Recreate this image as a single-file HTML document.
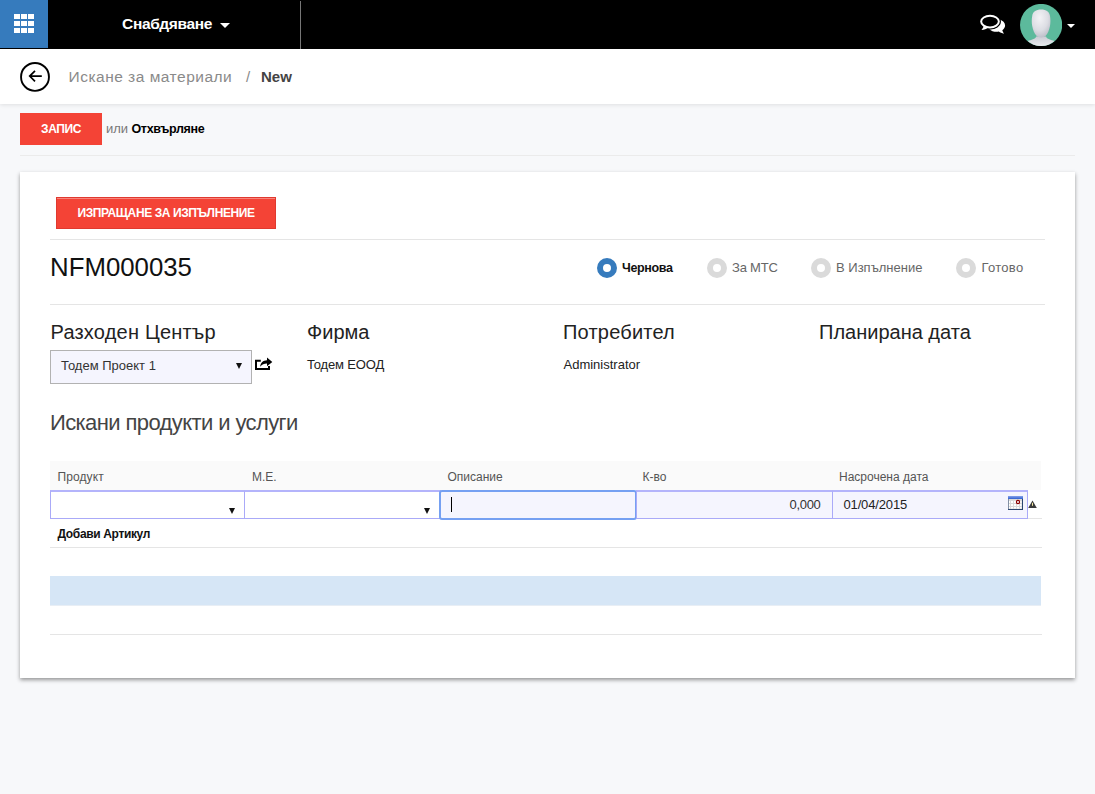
<!DOCTYPE html>
<html lang="bg">
<head>
<meta charset="utf-8">
<title>Искане за материали</title>
<style>
*{box-sizing:border-box;margin:0;padding:0}
html,body{width:1095px;height:794px;overflow:hidden}
body{background:#f7f8fa;font-family:"Liberation Sans",sans-serif;font-size:13px;color:#222;position:relative}
.abs{position:absolute;white-space:nowrap}
#topbar{left:0;top:0;width:1095px;height:49px;background:#000}
#apps{left:0;top:0;width:48px;height:48px;background:#367bbd}
#menu{left:122px;top:14px;color:#fff;font-size:15.500px;font-weight:bold;line-height:20px;letter-spacing:-0.3px}
.caret{width:0;height:0;border-left:5px solid transparent;border-right:5px solid transparent;border-top:5px solid #fff}
#sep{left:300px;top:1px;width:1px;height:48px;background:#777}
#crumbbar{left:0;top:49px;width:1095px;height:55px;background:#fff;box-shadow:0 1px 4px rgba(0,0,0,.10)}
#back{left:20px;top:62px;width:30px;height:30px}
#crumb1{left:68.500px;top:67px;font-size:15.500px;line-height:20px;color:#8a8a8a;letter-spacing:0.5px}
#crumbsl{left:246px;top:67px;font-size:15px;line-height:20px;color:#8a8a8a}
#crumb2{left:261px;top:67px;font-size:15px;line-height:20px;color:#444;font-weight:bold}
.btn{background:#f44336;color:#fff;font-weight:bold;font-size:12px;text-align:center;letter-spacing:-0.4px}
#save{left:20px;top:113px;width:82px;height:32px;line-height:32px}
#or{left:106px;top:121px;font-size:13px;line-height:16px;color:#777}
#discard{left:131.500px;top:121px;font-size:12.500px;line-height:16px;color:#000;font-weight:bold;letter-spacing:-0.35px}
.hr{height:1px;background:#e5e5e5}
#card{left:20px;top:172px;width:1055px;height:506px;background:#fff;box-shadow:0 2px 4px rgba(0,0,0,.4)}
#send{left:56px;top:197px;width:220px;height:32px;line-height:30px;border:1px solid #e0392f;letter-spacing:-0.4px;box-shadow:inset 0 1px 0 rgba(255,255,255,.35)}
#num{left:50px;top:251px;font-size:25.800px;line-height:32px;color:#111}
.radio{width:20px;height:20px;border-radius:50%;border:6px solid #dadada;background:#fff}
.radio.on{border-color:#367bbd}
.rl{font-size:13px;line-height:16px;color:#666}
.rl.on{color:#111;font-weight:bold;font-size:12.500px;letter-spacing:-0.35px}
.lbl{font-size:20px;line-height:24px;color:#222}
.val{font-size:13px;line-height:16px;color:#222}
#sel{left:50px;top:350px;width:202px;height:34px;background:#f5f5fe;border:1px solid #b2b2b2;font-size:13px;line-height:29px;padding-left:10px;color:#333}
#h2{left:50px;top:410px;font-size:22px;line-height:26px;color:#444;letter-spacing:-0.6px}
#thead{left:50px;top:461px;width:991px;height:29px;background:#fafafa}
.th{top:469px;font-size:12px;line-height:16px;color:#555}
.cell{top:490px;height:29px;border:1px solid #aaaaf8;border-top:2px solid #b4b4fb;background:#fff}
.arr{width:0;height:0;border-left:3px solid transparent;border-right:3px solid transparent;border-top:6px solid #111}
#add{left:57.500px;top:526px;font-size:12px;line-height:16px;font-weight:bold;color:#111;letter-spacing:-0.35px}
#band{left:50px;top:576px;width:991px;height:30px;background:#d6e6f6;border-bottom:1px solid #e8eef5}
</style>
</head>
<body>
<div class="abs" id="topbar"></div>
<div class="abs" id="apps">
<svg class="abs" style="left:14px;top:14px" width="20" height="20" viewBox="0 0 20 20"><g fill="#fff"><rect x="0" y="0" width="6" height="5"/><rect x="7" y="0" width="6" height="5"/><rect x="14" y="0" width="6" height="5"/><rect x="0" y="7" width="6" height="5"/><rect x="7" y="7" width="6" height="5"/><rect x="14" y="7" width="6" height="5"/><rect x="0" y="14" width="6" height="5"/><rect x="7" y="14" width="6" height="5"/><rect x="14" y="14" width="6" height="5"/></g></svg>
</div>
<div class="abs" id="menu">Снабдяване</div>
<div class="abs caret" style="left:220px;top:23px"></div>
<div class="abs" id="sep"></div>
<svg class="abs" id="chat" style="left:979px;top:13px" width="28" height="22" viewBox="0 0 28 22"><path d="M20.500 6.600c3.300 1 5.600 3.300 5.600 6 0 1.900-1.100 3.500-2.800 4.600 0.300 1.300 1 2.400 1.700 3.600-2.200-0.300-3.900-1.200-5.200-2.200-0.700 0.100-1.400 0.200-2.100 0.200-3 0-5.700-1-7.400-2.600 6.500 0.600 11.500-3.400 10.200-9.600z" fill="#fff"/><ellipse cx="11" cy="8.600" rx="8.850" ry="5.800" fill="#000" stroke="#000" stroke-width="4.200"/><ellipse cx="11" cy="8.600" rx="8.850" ry="5.800" fill="#000" stroke="#fff" stroke-width="2"/><path d="M4.800 12.600c-0.300 1.600-1 3-2.300 4.400 2.800-0.200 5-1.200 6.800-2.600z" fill="#fff"/></svg>
<svg class="abs" id="avatar" style="left:1020px;top:4px" width="42" height="42" viewBox="0 0 42 42"><defs><clipPath id="cp"><circle cx="21.100" cy="21" r="21"/></clipPath><radialGradient id="hg" cx="0.420" cy="0.300" r="0.750"><stop offset="0" stop-color="#f3f3f6"/><stop offset="0.600" stop-color="#dcdde3"/><stop offset="1" stop-color="#b9bbc6"/></radialGradient><linearGradient id="sg" x1="0" y1="0" x2="0" y2="1"><stop offset="0" stop-color="#c9cbd3"/><stop offset="0.400" stop-color="#d9dbe1"/><stop offset="1" stop-color="#f0f0f3"/></linearGradient></defs><circle cx="21.100" cy="21" r="21.100" fill="#5cba9c"/><g clip-path="url(#cp)"><path d="M16.100 32.500C15.600 35.300 11 35.800 7.800 36.900L2 40V44H40V40L34.400 36.900C31.200 35.800 26.600 35.300 26.100 32.500z" fill="url(#sg)"/><path d="M21.100 5.600C26.300 5.600 29.500 7.800 30 12C30.600 15 30.600 19 30 22C29.300 26 27.800 29.300 25.900 31.600C24.600 33 23 33.500 21.100 33.500C19.200 33.500 17.600 33 16.300 31.600C14.400 29.300 12.900 26 12.200 22C11.600 19 11.600 15 12.200 12C12.700 7.800 15.900 5.600 21.100 5.600z" fill="url(#hg)"/></g></svg>
<div class="abs caret" style="left:1067px;top:24px;border-left-width:4px;border-right-width:4px;border-top-width:4px"></div>

<div class="abs" id="crumbbar"></div>
<svg class="abs" id="back" viewBox="0 0 30 30"><circle cx="15" cy="14.900" r="13.950" fill="#fff" stroke="#000" stroke-width="1.900"/><path d="M21.800 14.100H10M15 8.800L9.700 14.100L15 19.400" fill="none" stroke="#000" stroke-width="1.700"/></svg>
<div class="abs" id="crumb1">Искане за материали</div>
<div class="abs" id="crumbsl">/</div>
<div class="abs" id="crumb2">New</div>

<div class="abs btn" id="save">ЗАПИС</div>
<div class="abs" id="or">или</div>
<div class="abs" id="discard">Отхвърляне</div>
<div class="abs hr" style="left:20px;top:155px;width:1055px;background:#ebebeb"></div>

<div class="abs" id="card"></div>
<div class="abs btn" id="send">ИЗПРАЩАНЕ ЗА ИЗПЪЛНЕНИЕ</div>
<div class="abs hr" style="left:50px;top:239px;width:995px"></div>
<div class="abs" id="num">NFM000035</div>

<div class="abs radio on" style="left:597px;top:258px"></div>
<div class="abs rl on" style="left:622px;top:260px">Чернова</div>
<div class="abs radio" style="left:707px;top:258px"></div>
<div class="abs rl" style="left:732px;top:260px;letter-spacing:-0.2px">За МТС</div>
<div class="abs radio" style="left:811px;top:258px"></div>
<div class="abs rl" style="left:836px;top:260px">В Изпълнение</div>
<div class="abs radio" style="left:956px;top:258px"></div>
<div class="abs rl" style="left:981.500px;top:260px;letter-spacing:0.3px">Готово</div>
<div class="abs hr" style="left:50px;top:304px;width:995px"></div>

<div class="abs lbl" style="left:50.500px;top:320px;letter-spacing:0.2px">Разходен Център</div>
<div class="abs lbl" style="left:307px;top:320px">Фирма</div>
<div class="abs lbl" style="left:563px;top:320px;letter-spacing:0.2px">Потребител</div>
<div class="abs lbl" style="left:819px;top:320px">Планирана дата</div>
<div class="abs" id="sel">Тодем Проект 1</div>
<div class="abs arr" style="left:236px;top:363px"></div>
<svg class="abs" id="share" style="left:255px;top:357px" width="18" height="14" viewBox="0 0 18 14"><path d="M0 2.800H5.800V4.800H2V11.100H13V9H15V13.100H0z" fill="#000"/><path d="M12 0.600L17.300 4.900L12 9.200V6.600C9 6.600 7 7.400 5.200 9.700C5.500 5.600 8 3.300 12 3.200z" fill="#000"/></svg>
<div class="abs val" style="left:307px;top:357px;letter-spacing:-0.15px">Тодем ЕООД</div>
<div class="abs val" style="left:563.500px;top:357px">Administrator</div>

<div class="abs" id="h2">Искани продукти и услуги</div>
<div class="abs" id="thead"></div>
<div class="abs th" style="left:57.500px;letter-spacing:0.1px">Продукт</div>
<div class="abs th" style="left:252px">М.Е.</div>
<div class="abs th" style="left:447.500px">Описание</div>
<div class="abs th" style="left:642.500px">К-во</div>
<div class="abs th" style="left:839px">Насрочена дата</div>

<div class="abs hr" style="left:50px;top:518px;width:992px"></div>
<div class="abs cell" style="left:50px;width:195px"></div>
<div class="abs arr" style="left:229px;top:508px"></div>
<div class="abs cell" style="left:244px;width:197px"></div>
<div class="abs arr" style="left:424px;top:508px"></div>
<div class="abs cell" style="left:439px;width:198px;height:30px;background:#f5f5fe;border:2px solid #75a0f2;border-radius:3px"></div>
<div class="abs" style="left:451px;top:497px;width:1px;height:15px;background:#000"></div>
<div class="abs cell" style="left:636px;width:197px;background:#f5f5fe"></div>
<div class="abs val" style="left:789.500px;top:497px;color:#333;letter-spacing:-0.3px">0,000</div>
<div class="abs cell" style="left:832px;width:196px;background:#f5f5fe"></div>
<div class="abs val" style="left:843.500px;top:497px;color:#222;letter-spacing:-0.15px">01/04/2015</div>
<svg class="abs" id="cal" style="left:1008px;top:496px" width="15" height="14" viewBox="0 0 15 14"><defs><linearGradient id="cg" x1="0" y1="0" x2="0" y2="1"><stop offset="0" stop-color="#86a2ea"/><stop offset="1" stop-color="#2f5fd0"/></linearGradient></defs><rect x="0" y="0" width="15" height="14" fill="#2c4670"/><rect x="0.500" y="3" width="13.500" height="10" fill="#dadada"/><rect x="0" y="0" width="15" height="3" fill="url(#cg)"/><g fill="#fff"><rect x="1" y="5" width="1" height="2"/><rect x="3" y="5" width="2" height="2"/><rect x="6" y="5" width="2" height="2"/><rect x="9" y="5" width="2" height="2"/><rect x="12" y="5" width="1.5" height="2"/><rect x="1" y="8" width="1" height="2"/><rect x="3" y="8" width="2" height="2"/><rect x="6" y="8" width="2" height="2"/><rect x="9" y="8" width="2" height="2"/><rect x="12" y="8" width="1.5" height="2"/><rect x="1" y="11" width="1" height="1.5"/><rect x="3" y="11" width="2" height="1.5"/><rect x="6" y="11" width="2" height="1.5"/><rect x="9" y="11" width="2" height="1.5"/><rect x="12" y="11" width="1.5" height="1.5"/></g><circle cx="10" cy="6" r="1.600" fill="#fff" stroke="#8b0000" stroke-width="1.200"/></svg>
<svg class="abs" id="warn" style="left:1028px;top:500px" width="9" height="8" viewBox="0 0 9 8"><path d="M4.500 0.600L8.800 8H0.200z" fill="#3a3a3a"/><rect x="4" y="2.800" width="1" height="3" fill="#f3e7a0"/></svg>
<div class="abs" id="add">Добави Артикул</div>
<div class="abs hr" style="left:50px;top:547px;width:992px"></div>
<div class="abs" id="band"></div>
<div class="abs hr" style="left:50px;top:634px;width:992px"></div>
</body>
</html>
